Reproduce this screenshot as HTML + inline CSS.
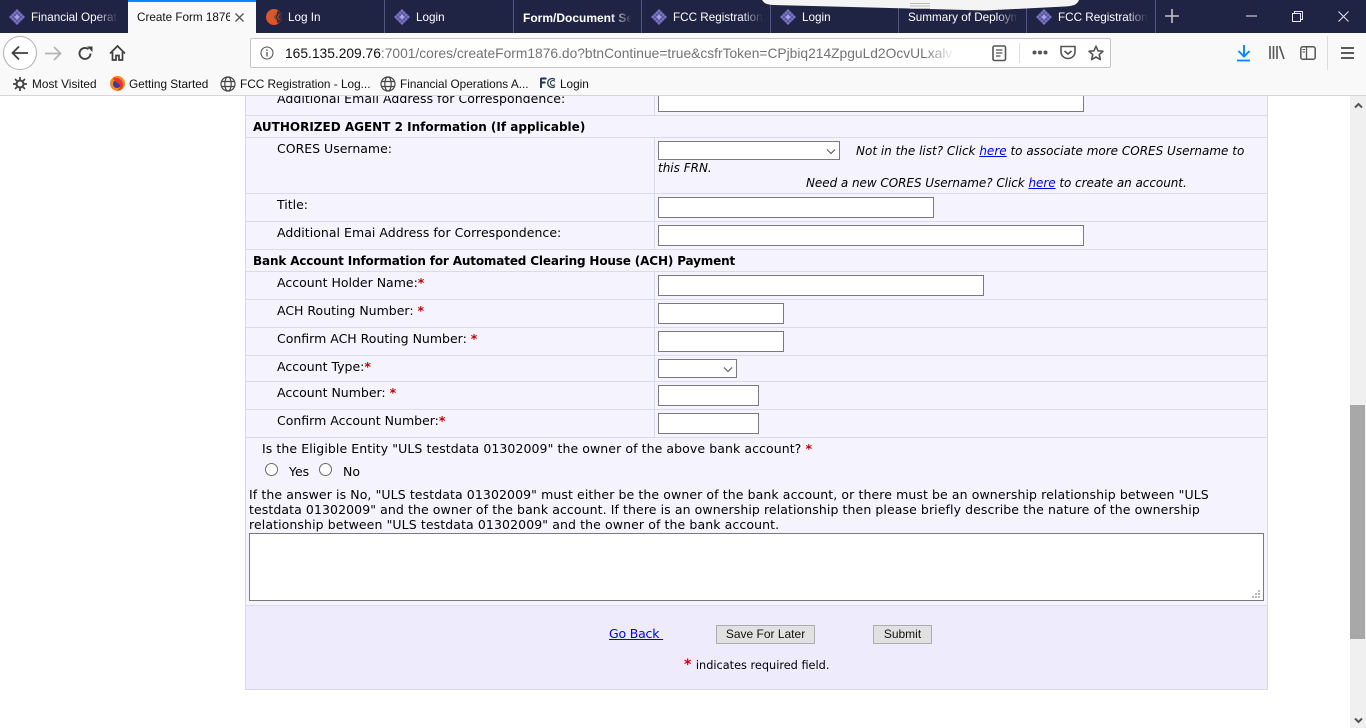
<!DOCTYPE html>
<html><head><meta charset="utf-8"><title>Create Form 1876</title>
<style>
html,body{margin:0;padding:0;width:1366px;height:728px;overflow:hidden;background:#fff}
body{position:relative;font-family:"DejaVu Sans",Verdana,sans-serif;font-size:12.5px;color:#000}
.a{position:absolute;white-space:nowrap}
.tb{font-family:"Liberation Sans",sans-serif;font-size:11.7px;color:#fff;overflow:hidden;top:10px;height:16px;line-height:16px}
.sep{position:absolute;top:0;width:1px;height:33px;background:#55587a}
.fade{position:absolute;top:8px;width:22px;height:20px;background:linear-gradient(to right,rgba(31,35,68,0),#1f2344)}
.bm{font-family:"Liberation Sans",sans-serif;font-size:11.8px;color:#111;top:76px;line-height:16px}
.h{position:absolute;left:246px;width:1021px;height:1px;background:#d9d9f2}
.in{position:absolute;box-sizing:border-box;border:1px solid #7a7a7a;background:#fff}
.l{position:absolute;left:277px;white-space:nowrap;line-height:15px;color:#000}
.r{color:#c00000;font-weight:bold}
.b{font-weight:bold;font-size:12px;position:absolute;left:253px;white-space:nowrap;line-height:15px}
.t{position:absolute;white-space:nowrap;line-height:15px;color:#000}
.i{font-style:italic;font-size:12px}
a{color:#0000ee;text-decoration:underline}
.btn{position:absolute;box-sizing:border-box;background:#e1e1e1;border:1px solid #adadad;font-family:"Liberation Sans",sans-serif;font-size:12px;text-align:center;line-height:17px;color:#111;top:625px;height:19px}
svg{position:absolute;overflow:visible}
</style></head><body>

<!-- page content -->
<div class="a" style="left:245px;top:96px;width:1023px;height:594px;box-sizing:border-box;border:1px solid #d9d9f2;border-width:0 1px 1px 1px;background:#f5f4fe"></div>
<div class="a" style="left:246px;top:605px;width:1021px;height:84px;background:#eeebfd"></div>
<div class="a" style="left:654px;top:96px;width:1px;height:19px;background:#d9d9f2"></div>
<div class="a" style="left:654px;top:137px;width:1px;height:112px;background:#d9d9f2"></div>
<div class="a" style="left:654px;top:271px;width:1px;height:166px;background:#d9d9f2"></div>
<div class="h" style="top:115px"></div><div class="h" style="top:137px"></div><div class="h" style="top:193px"></div><div class="h" style="top:221px"></div><div class="h" style="top:249px"></div><div class="h" style="top:271px"></div><div class="h" style="top:299px"></div><div class="h" style="top:327px"></div><div class="h" style="top:355px"></div><div class="h" style="top:381px"></div><div class="h" style="top:409px"></div><div class="h" style="top:437px"></div><div class="h" style="top:605px"></div>

<div class="l" style="top:91px;letter-spacing:.04px">Additional Email Address for Correspondence:</div>
<div class="in" style="left:658px;top:90px;width:426px;height:22px"></div>
<div class="b" style="top:120px">AUTHORIZED AGENT 2 Information (If applicable)</div>
<div class="l" style="top:141px">CORES Username:</div>
<div class="in" style="left:658px;top:141px;width:182px;height:19px"></div>
<svg style="left:826px;top:148px" width="10" height="7"><path d="M1 1.500L5 5.500L9 1.500" fill="none" stroke="#555" stroke-width="1.100"/></svg>
<div class="t i" style="left:856px;top:144px">Not in the list? Click <a>here</a> to associate more CORES Username to</div>
<div class="t i" style="left:658px;top:161px">this FRN.</div>
<div class="t i" style="left:806px;top:176px;letter-spacing:-.05px">Need a new CORES Username? Click <a>here</a> to create an account.</div>
<div class="l" style="top:197px">Title:</div>
<div class="in" style="left:658px;top:197px;width:276px;height:21px"></div>
<div class="l" style="top:225px;letter-spacing:.03px">Additional Emai Address for Correspondence:</div>
<div class="in" style="left:658px;top:225px;width:426px;height:21px"></div>
<div class="b" style="top:254px;letter-spacing:-.15px">Bank Account Information for Automated Clearing House (ACH) Payment</div>
<div class="l" style="top:275px">Account Holder Name:<span class="r">*</span></div>
<div class="in" style="left:658px;top:275px;width:326px;height:21px"></div>
<div class="l" style="top:303px">ACH Routing Number: <span class="r">*</span></div>
<div class="in" style="left:658px;top:303px;width:126px;height:21px"></div>
<div class="l" style="top:331px">Confirm ACH Routing Number: <span class="r">*</span></div>
<div class="in" style="left:658px;top:331px;width:126px;height:21px"></div>
<div class="l" style="top:359px">Account Type:<span class="r">*</span></div>
<div class="in" style="left:658px;top:359px;width:79px;height:19px"></div>
<svg style="left:723px;top:366px" width="10" height="7"><path d="M1 1.500L5 5.500L9 1.500" fill="none" stroke="#555" stroke-width="1.100"/></svg>
<div class="l" style="top:385px">Account Number: <span class="r">*</span></div>
<div class="in" style="left:658px;top:385px;width:101px;height:21px"></div>
<div class="l" style="top:413px">Confirm Account Number:<span class="r">*</span></div>
<div class="in" style="left:658px;top:413px;width:101px;height:21px"></div>

<div class="t" style="left:262px;top:441px;letter-spacing:.08px">Is the Eligible Entity "ULS testdata 01302009" the owner of the above bank account? <span class="r">*</span></div>
<svg style="left:265px;top:463px" width="13" height="13"><circle cx="6.500" cy="6.500" r="6" fill="#fff" stroke="#6a6a6a"/></svg>
<div class="t" style="left:289px;top:464px">Yes</div>
<svg style="left:319px;top:463px" width="13" height="13"><circle cx="6.500" cy="6.500" r="6" fill="#fff" stroke="#6a6a6a"/></svg>
<div class="t" style="left:343px;top:464px">No</div>
<div class="t" style="left:249px;top:487px;letter-spacing:.095px">If the answer is No, "ULS testdata 01302009" must either be the owner of the bank account, or there must be an ownership relationship between "ULS</div>
<div class="t" style="left:249px;top:502px;letter-spacing:.087px">testdata 01302009" and the owner of the bank account. If there is an ownership relationship then please briefly describe the nature of the ownership</div>
<div class="t" style="left:249px;top:517px;letter-spacing:.1px">relationship between "ULS testdata 01302009" and the owner of the bank account.</div>
<div class="in" style="left:249px;top:533px;width:1015px;height:68px"></div>
<svg style="left:1252px;top:590px" width="9" height="9"><g fill="#bbb"><rect x="6" y="0" width="2" height="2"/><rect x="3" y="3" width="2" height="2"/><rect x="6" y="3" width="2" height="2"/><rect x="0" y="6" width="2" height="2"/><rect x="3" y="6" width="2" height="2"/><rect x="6" y="6" width="2" height="2"/></g></svg>

<div class="t" style="left:609px;top:626px;letter-spacing:-.2px"><a>Go Back&nbsp;</a></div>
<div class="btn" style="left:716px;width:99px">Save For Later</div>
<div class="btn" style="left:873px;width:59px">Submit</div>
<div class="t" style="left:684px;top:658px;font-size:11.3px"><span class="r" style="font-size:14px;margin-right:1px">*</span> indicates required field.</div>

<!-- scrollbar -->
<div class="a" style="left:1350px;top:96px;width:16px;height:632px;background:#f0f0f0"></div>
<div class="a" style="left:1350px;top:405px;width:15px;height:234px;background:#a8a8a8"></div>
<svg style="left:1354px;top:102px" width="9" height="7"><path d="M1 5.500L4.500 2L8 5.500" fill="none" stroke="#555" stroke-width="2"/></svg>
<svg style="left:1354px;top:717px" width="9" height="7"><path d="M1 1.500L4.500 5L8 1.500" fill="none" stroke="#555" stroke-width="2"/></svg>

<!-- toolbars -->
<div class="a" style="left:0;top:33px;width:1366px;height:63px;background:#f9f9fa;border-bottom:1px solid #d7d7db;box-sizing:border-box"></div>

<!-- tab bar -->
<div class="a" style="left:0;top:0;width:1366px;height:33px;background:#1f2344"></div>
<div class="a" style="left:128px;top:0;width:128px;height:33px;background:#f9f9fa"></div>
<div class="a" style="left:128px;top:0;width:128px;height:2px;background:#0a84ff"></div>
<svg width="0" height="0" style="left:0;top:0"><defs><g id="d"><path d="M8 0L16 8L8 16L0 8Z" fill="#7b76c4"/><path d="M4 4L12 12M6 2L14 10M2 6L10 14M12 4L4 12M14 6L6 14M10 2L2 10" stroke="#4f4b96" stroke-width=".7"/><path d="M8 5.500L10.500 8L8 10.500L5.500 8Z" fill="#a7a4e0"/></g></defs></svg>
<div class="sep" style="left:384px"></div><div class="sep" style="left:513px"></div><div class="sep" style="left:641px"></div><div class="sep" style="left:770px"></div><div class="sep" style="left:898px"></div><div class="sep" style="left:1026px"></div><div class="sep" style="left:1155px"></div>

<svg style="left:9px;top:9px" width="16" height="16"><use href="#d"/></svg>
<div class="a tb" style="left:31px;width:86px">Financial Operations</div><div class="fade" style="left:96px"></div>
<div class="a tb" style="left:137px;width:93px;color:#111">Create Form 1876</div>
<svg style="left:235px;top:13px" width="9" height="9"><path d="M.5 .5L8.500 8.500M8.500 .5L.5 8.500" stroke="#555" stroke-width="1.300"/></svg>
<svg style="left:266px;top:9px" width="16" height="16"><circle cx="8" cy="8" r="8" fill="#d9582b"/><path d="M12 1.500C14.500 3 16 5.500 16 8C16 10.500 14.500 13 12 14.500L8 8Z" fill="#3a2a3c"/><path d="M11 4L9 8L11 12M13.500 5L11.500 8L13.500 11" stroke="#d9582b" stroke-width=".7" fill="none"/></svg>
<div class="a tb" style="left:288px">Log In</div>
<svg style="left:394px;top:9px" width="16" height="16"><use href="#d"/></svg>
<div class="a tb" style="left:416px">Login</div>
<div class="a tb" style="left:523px;width:108px;font-weight:bold;font-size:12px">Form/Document Search</div><div class="fade" style="left:610px"></div>
<svg style="left:651px;top:9px" width="16" height="16"><use href="#d"/></svg>
<div class="a tb" style="left:673px;width:90px">FCC Registration</div><div class="fade" style="left:741px"></div>
<svg style="left:780px;top:9px" width="16" height="16"><use href="#d"/></svg>
<div class="a tb" style="left:802px">Login</div>
<div class="a tb" style="left:908px;width:110px">Summary of Deployment</div><div class="fade" style="left:996px"></div>
<svg style="left:1036px;top:9px" width="16" height="16"><use href="#d"/></svg>
<div class="a tb" style="left:1058px;width:90px">FCC Registration</div><div class="fade" style="left:1126px"></div>
<svg style="left:1165px;top:9px" width="14" height="14"><path d="M7 0V14M0 7H14" stroke="#c4c4cc" stroke-width="1.600"/></svg>
<svg style="left:1246px;top:15px" width="11" height="2"><path d="M0 1H11" stroke="#e8e8ee"/></svg>
<svg style="left:1292px;top:11px" width="11" height="11"><path d="M.5 2.500H8.500V10.500H.5ZM2.500 2.500V.5H10.500V8.500H8.500" fill="none" stroke="#e8e8ee"/></svg>
<svg style="left:1338px;top:11px" width="11" height="11"><path d="M.5 .5L10.500 10.500M10.500 .5L.5 10.500" stroke="#e8e8ee"/></svg>

<!-- popup sliver -->
<svg style="left:760px;top:0" width="320" height="12"><path d="M2 0C4 3 6 4.500 13 5L150 8.500L225 10.500L305 6.500C313 6 317 5 319 0Z" fill="#f4f4f4"/><path d="M150 3.500H170M150 6H170M150 8.500H170" stroke="#bbb" stroke-width="1"/></svg>

<!-- nav buttons -->
<svg style="left:3px;top:36px" width="34" height="34"><circle cx="17" cy="17" r="16.500" fill="#fff" stroke="#b1b1b3"/><path d="M9.500 17H25M16 10.500L9.500 17L16 23.500" fill="none" stroke="#3f3f41" stroke-width="1.800"/></svg>
<svg style="left:45px;top:46px" width="17" height="15"><path d="M0 7.500H15M9 1L15.500 7.500L9 14" fill="none" stroke="#b4b4b6" stroke-width="1.800"/></svg>
<svg style="left:78px;top:46px" width="15" height="15"><path d="M12.500 7.500A5.500 5.500 0 1 1 10.500 3.200" fill="none" stroke="#3f3f41" stroke-width="1.900"/><path d="M9 .5L14.500 .5V6Z" fill="#3f3f41"/></svg>
<svg style="left:109px;top:45px" width="17" height="16"><path d="M1 8.500L8.500 1L16 8.500M3.500 7V15H7V10.500H10V15H13.500V7" fill="none" stroke="#3f3f41" stroke-width="1.700"/></svg>

<!-- url bar -->
<div class="a" style="left:250px;top:38px;width:861px;height:30px;box-sizing:border-box;background:#fff;border:1px solid #c5c5c7;border-radius:2px"></div>
<svg style="left:260px;top:46px" width="14" height="14"><circle cx="7" cy="7" r="6" fill="none" stroke="#555" stroke-width="1.100"/><path d="M7 6V10.500M7 3.500V5" stroke="#555" stroke-width="1.300"/></svg>
<div class="a" style="left:285px;top:45px;width:680px;overflow:hidden;font-family:'Liberation Sans',sans-serif;font-size:13.800px;line-height:18px;color:#737373"><span style="color:#111">165.135.209.76</span>:7001/cores/createForm1876.do?btnContinue=true&amp;csfrToken=CPjbiq214ZpguLd2OcvULxalv</div>
<div class="a" style="left:925px;top:42px;width:30px;height:22px;background:linear-gradient(to right,rgba(255,255,255,0),#fff)"></div>
<svg style="left:992px;top:45px" width="15" height="17"><rect x="1" y="1" width="12.500" height="14.500" rx="1.500" fill="none" stroke="#555" stroke-width="1.600"/><path d="M4 5H10.500M4 8H10.500M4 11H8.500" stroke="#555" stroke-width="1.200"/></svg>
<div class="a" style="left:1019px;top:43px;width:1px;height:20px;background:#e0e0e2"></div>
<svg style="left:1032px;top:50px" width="16" height="5"><g fill="#555"><circle cx="2.500" cy="2.500" r="2"/><circle cx="8" cy="2.500" r="2"/><circle cx="13.500" cy="2.500" r="2"/></g></svg>
<svg style="left:1060px;top:45px" width="16" height="15"><path d="M1 1.500H15V7A7 6.500 0 0 1 1 7Z" fill="none" stroke="#555" stroke-width="1.600"/><path d="M4.500 6L8 9L11.500 6" fill="none" stroke="#555" stroke-width="1.700"/></svg>
<svg style="left:1088px;top:45px" width="16" height="16"><path d="M8 1.200L10 5.800L15 6.300L11.200 9.600L12.400 14.600L8 12L3.600 14.600L4.800 9.600L1 6.300L6 5.800Z" fill="none" stroke="#555" stroke-width="1.600" stroke-linejoin="round"/></svg>

<!-- right toolbar -->
<svg style="left:1237px;top:45px" width="14" height="17"><path d="M7 0V11M1.500 6L7 11.500L12.500 6" fill="none" stroke="#0a84ff" stroke-width="1.900"/><path d="M0 15.500H13" stroke="#0a84ff" stroke-width="1.800"/></svg>
<svg style="left:1269px;top:46px" width="16" height="14"><path d="M1 0V13M4.500 0V13M8 0V13M10.500 0L15 13" fill="none" stroke="#555" stroke-width="1.600"/></svg>
<svg style="left:1300px;top:46px" width="16" height="14"><rect x=".8" y=".8" width="14.400" height="12.400" rx="2" fill="none" stroke="#555" stroke-width="1.500"/><path d="M6.500 1V13" stroke="#555" stroke-width="1.300"/><path d="M2.500 3.500H5M2.500 6H5" stroke="#555"/></svg>
<div class="a" style="left:1327px;top:36px;width:1px;height:34px;background:#dcdcde"></div>
<svg style="left:1341px;top:47px" width="13" height="13"><path d="M0 1H13M0 6H13M0 11H13" stroke="#444" stroke-width="1.700"/></svg>

<!-- bookmarks -->
<svg style="left:13px;top:77px" width="14" height="14"><circle cx="7" cy="7" r="3.500" fill="none" stroke="#444" stroke-width="2"/><path d="M7 0V3M7 11V14M0 7H3M11 7H14M2 2L4 4M10 10L12 12M12 2L10 4M4 10L2 12" stroke="#444" stroke-width="1.700"/></svg>
<div class="a bm" style="left:32px;letter-spacing:.05px">Most Visited</div>
<svg style="left:110px;top:76px" width="15" height="15"><circle cx="7.500" cy="7.500" r="7.500" fill="#f58a1f"/><circle cx="7" cy="8" r="4" fill="#3a3aa8"/><path d="M3 2C7 1 13 3 13 9C13 12 10 15 7 14.500C10 13 11 10 9 8C7 6.500 5 6 3 2Z" fill="#e8381f"/></svg>
<div class="a bm" style="left:129px">Getting Started</div>
<svg style="left:220px;top:76px" width="16" height="16"><g fill="none" stroke="#444" stroke-width="1.200"><circle cx="8" cy="8" r="7"/><ellipse cx="8" cy="8" rx="3.200" ry="7"/><path d="M1.500 5.500H14.500M1.500 10.500H14.500"/></g></svg>
<div class="a bm" style="left:240px">FCC Registration - Log...</div>
<svg style="left:380px;top:76px" width="16" height="16"><g fill="none" stroke="#444" stroke-width="1.200"><circle cx="8" cy="8" r="7"/><ellipse cx="8" cy="8" rx="3.200" ry="7"/><path d="M1.500 5.500H14.500M1.500 10.500H14.500"/></g></svg>
<div class="a bm" style="left:400px">Financial Operations A...</div>
<svg style="left:540px;top:77px" width="16" height="12"><path d="M1 1V11M1 1.500H6.500M1 5.500H5.500" fill="none" stroke="#1d3557" stroke-width="1.900"/><path d="M15 2.500A4.500 4.500 0 1 0 15 9.500" fill="none" stroke="#1d3557" stroke-width="1.300"/><path d="M15 4.500A2.500 2.500 0 1 0 15 7.500" fill="none" stroke="#1d3557" stroke-width="1"/></svg>
<div class="a bm" style="left:560px">Login</div>
</body></html>
